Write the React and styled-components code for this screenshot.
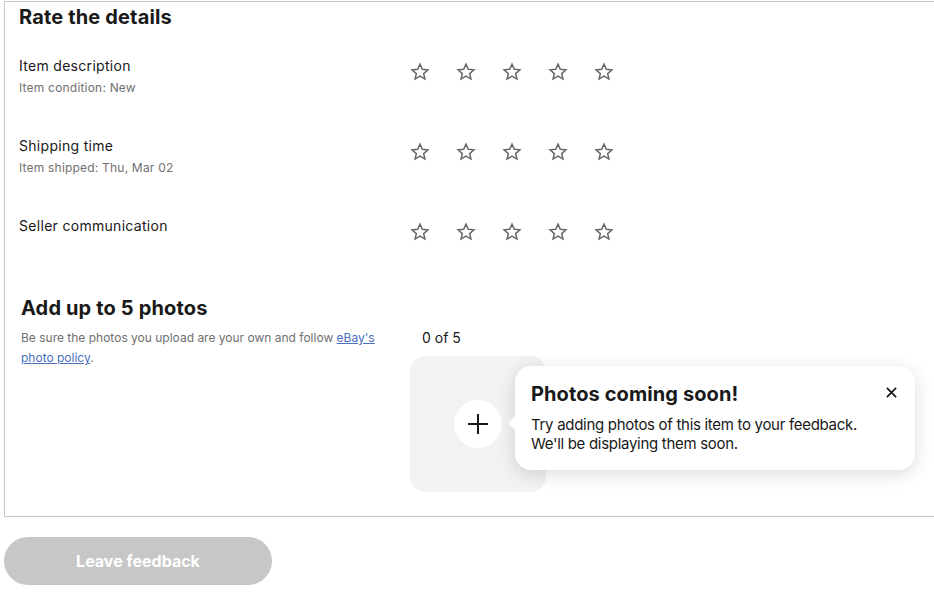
import React from "react";
import styled, { createGlobalStyle } from "styled-components";

const GlobalStyle = createGlobalStyle`
  html, body { margin: 0; padding: 0; background: #fff; }
  body {
    font-family: Inter, "Open Sans", Arial, sans-serif;
    color: #191919;
    overflow: hidden;
  }
  * { box-sizing: border-box; }
`;

const Page = styled.div`
  width: 934px;
  height: 597px;
  overflow: hidden;
  padding-top: 1px;
`;

const Panel = styled.section`
  margin-left: 4px;
  margin-right: -20px;
  border: 1px solid #c7c7c7;
  padding: 3px 0 24px 14px;
`;

const SectionTitle = styled.h2`
  margin: 0;
  font-size: 20px;
  line-height: 24px;
  font-weight: 700;
  letter-spacing: 0.15px;
  color: #191919;
`;

const RatingList = styled.div`
  margin-top: 27px;
  display: flex;
  flex-direction: column;
`;

const RatingRow = styled.div`
  display: grid;
  grid-template-columns: 391px auto;
  height: 80px;
`;

const RowText = styled.div`
  display: flex;
  flex-direction: column;
`;

const RowLabel = styled.span`
  font-size: 14px;
  line-height: 20px;
  letter-spacing: 0.3px;
  color: #191919;
`;

const RowSub = styled.span`
  margin-top: 2px;
  font-size: 12px;
  line-height: 20px;
  letter-spacing: 0.2px;
  color: #707070;
`;

const Stars = styled.div`
  display: flex;
  gap: 26px;
  padding-top: 6px;
  align-items: flex-start;
`;

const StarButton = styled.button`
  width: 20px;
  height: 20px;
  padding: 0;
  border: 0;
  background: none;
  color: #686868;
  display: flex;
  align-items: center;
  justify-content: center;
  cursor: pointer;
`;

const PhotoSection = styled.div`
  padding-left: 2px;
`;

const PhotoGrid = styled.div`
  margin-top: 8px;
  display: grid;
  grid-template-columns: 389px auto;
`;

const Hint = styled.p`
  margin: 0;
  font-size: 12px;
  line-height: 20px;
  color: #707070;
  max-width: 362px;
`;

const PolicyLink = styled.a`
  color: #4a6fbf;
  text-decoration: underline;
`;

const PhotoColumn = styled.div`
  display: flex;
  flex-direction: column;
  align-items: flex-start;
`;

const Count = styled.span`
  font-size: 14px;
  line-height: 20px;
  padding-left: 12px;
  color: #191919;
`;

const TileWrap = styled.div`
  position: relative;
  margin-top: 8px;
`;

const Tile = styled.div`
  width: 136px;
  height: 136px;
  border-radius: 16px;
  background: #f2f2f2;
  display: flex;
  align-items: center;
  justify-content: center;
`;

const AddCircle = styled.button`
  width: 48px;
  height: 48px;
  border-radius: 50%;
  border: 0;
  padding: 0;
  background: #fff;
  color: #191919;
  display: flex;
  align-items: center;
  justify-content: center;
`;

const Tooltip = styled.div`
  position: absolute;
  left: 105px;
  top: 10px;
  width: 400px;
  height: 104px;
  padding: 16px 50px 0 16px;
  background: #fff;
  border-radius: 16px;
  box-shadow: 0 4px 18px rgba(0, 0, 0, 0.14);

  &::before {
    content: "";
    position: absolute;
    left: -5px;
    top: 52px;
    width: 10px;
    height: 10px;
    background: #fff;
    transform: rotate(45deg);
  }
`;

const TipTitle = styled.h3`
  margin: 0;
  font-size: 20px;
  line-height: 24px;
  font-weight: 700;
  letter-spacing: 0.1px;
`;

const TipBody = styled.p`
  margin: 9px 0 0;
  font-size: 15px;
  line-height: 19px;
  letter-spacing: -0.3px;
  color: #191919;
  white-space: nowrap;
`;

const CloseButton = styled.button`
  position: absolute;
  top: 14px;
  right: 12px;
  width: 24px;
  height: 24px;
  padding: 0;
  border: 0;
  background: none;
  color: #191919;
  display: flex;
  align-items: center;
  justify-content: center;
`;

const SubmitButton = styled.button`
  margin: 20px 0 0 4px;
  width: 268px;
  height: 48px;
  border-radius: 24px;
  border: 0;
  background: #c7c7c7;
  color: #fff;
  font-family: inherit;
  font-size: 16px;
  font-weight: 700;
  letter-spacing: 0;
  display: block;
`;

const StarIcon = () => (
  <svg width="21" height="20" viewBox="0 0 24 24" fill="none" stroke="currentColor" strokeWidth="1.8" strokeLinejoin="miter">
    <path d="M12 2.6l2.75 6.2 6.75.6-5.1 4.5 1.55 6.6L12 17l-5.95 3.5 1.55-6.6-5.1-4.5 6.75-.6z" />
  </svg>
);

const PlusIcon = () => (
  <svg width="22" height="22" viewBox="0 0 22 22" stroke="currentColor" strokeWidth="2">
    <path d="M11 1v20M1 11h20" />
  </svg>
);

const CloseIcon = () => (
  <svg width="11" height="11" viewBox="0 0 12 12" stroke="currentColor" strokeWidth="1.9">
    <path d="M1 1l10 10M11 1L1 11" />
  </svg>
);

const rows = [
  { label: "Item description", sub: "Item condition: New" },
  { label: "Shipping time", sub: "Item shipped: Thu, Mar 02" },
  { label: "Seller communication" },
];

export default function App() {
  return (
    <>
      <GlobalStyle />
      <Page>
        <Panel>
          <SectionTitle>Rate the details</SectionTitle>
          <RatingList>
            {rows.map((r) => (
              <RatingRow key={r.label}>
                <RowText>
                  <RowLabel>{r.label}</RowLabel>
                  {r.sub && <RowSub>{r.sub}</RowSub>}
                </RowText>
                <Stars>
                  {[1, 2, 3, 4, 5].map((n) => (
                    <StarButton key={n} aria-label={`${n} star`}>
                      <StarIcon />
                    </StarButton>
                  ))}
                </Stars>
              </RatingRow>
            ))}
          </RatingList>
          <PhotoSection>
            <SectionTitle>Add up to 5 photos</SectionTitle>
            <PhotoGrid>
              <Hint>
                Be sure the photos you upload are your own and follow{" "}
                <PolicyLink href="#">eBay's photo policy</PolicyLink>.
              </Hint>
              <PhotoColumn>
                <Count>0 of 5</Count>
                <TileWrap>
                  <Tile>
                    <AddCircle aria-label="Add photo">
                      <PlusIcon />
                    </AddCircle>
                  </Tile>
                  <Tooltip>
                    <TipTitle>Photos coming soon!</TipTitle>
                    <TipBody>
                      Try adding photos of this item to your feedback.
                      <br />
                      We'll be displaying them soon.
                    </TipBody>
                    <CloseButton aria-label="Close">
                      <CloseIcon />
                    </CloseButton>
                  </Tooltip>
                </TileWrap>
              </PhotoColumn>
            </PhotoGrid>
          </PhotoSection>
        </Panel>
        <SubmitButton disabled>Leave feedback</SubmitButton>
      </Page>
    </>
  );
}
